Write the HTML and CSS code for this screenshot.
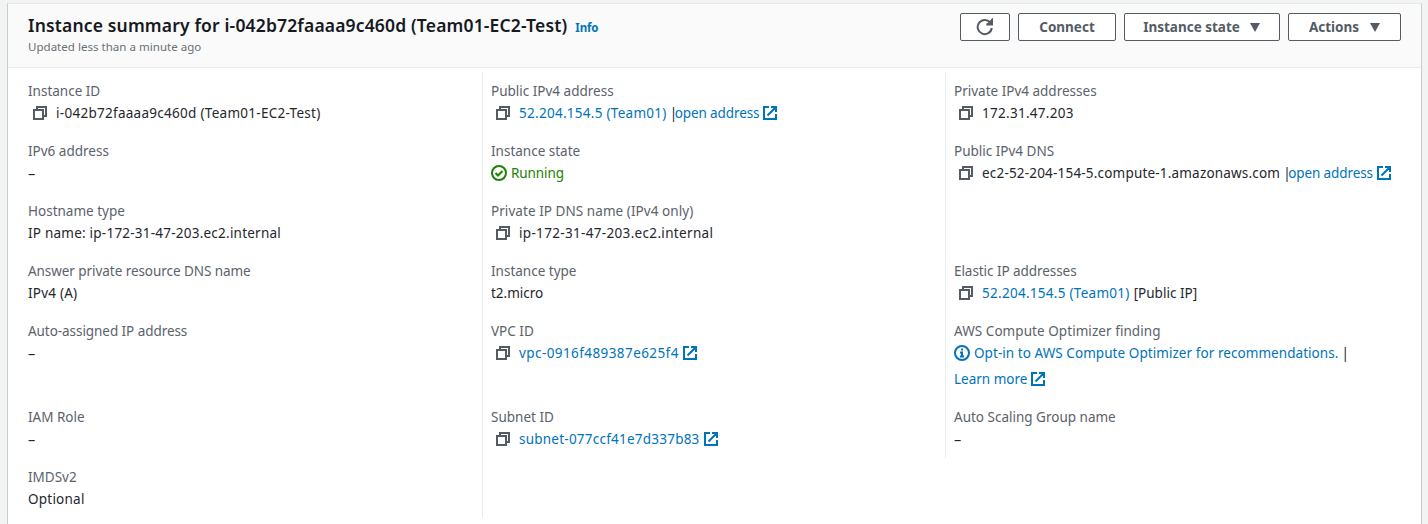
FILE: index.html
```
<!DOCTYPE html>
<html lang="en">
<head>
<meta charset="utf-8">
<title>Instance summary</title>
<link rel="stylesheet" href="styles.css">
</head>
<body>
<svg class="defs" width="0" height="0">
  <symbol id="copy" viewBox="0 0 14 14"><path d="M4 4V1h9v9h-3M1 4h9v9H1z"/></symbol>
  <symbol id="external" viewBox="0 0 14 14"><path d="M6 1H1v12h12V8M8 1h5v5M13 1 4.500 9.500"/></symbol>
  <symbol id="check" viewBox="0 0 16 16"><circle cx="8" cy="8" r="7"/><path d="m4.500 8 2.500 2.500 4.500-4.500"/></symbol>
  <symbol id="info" viewBox="0 0 16 16"><circle cx="8" cy="8" r="7"/><path d="M8 3.500v2M6 7.500h2V11M6 11.500h4"/></symbol>
  <symbol id="refresh" viewBox="0 0 18 18"><path d="M15.800 10A7.100 7.100 0 1 1 14.200 4.500L15.500 6M16 1v5.500h-5.500"/><path d="M12.500 5.500 16 2v3.500z"/></symbol>
</svg>
<main class="card">
  <header class="header">
    <div>
      <h1 class="title"><span class="title-text">Instance summary for i-042b72faaaa9c460d (Team01-EC2-Test)</span><a class="info-link">Info</a></h1>
      <p class="updated"><span>Updated less than a minute ago</span></p>
    </div>
    <div class="actions">
      <button class="btn btn-icon"><svg class="refresh"><use href="#refresh"/></svg></button>
      <button class="btn btn-connect"><span>Connect</span></button>
      <button class="btn btn-state"><span>Instance state</span><i class="caret"></i></button>
      <button class="btn btn-actions"><span>Actions</span><i class="caret"></i></button>
    </div>
  </header>
  <section class="details">
    <div class="cell"><div class="label"><span>Instance ID</span></div><div class="value"><svg class="copy"><use href="#copy"/></svg><span class="ident">i-042b72faaaa9c460d (Team01-EC2-Test)</span></div></div>
    <div class="cell"><div class="label"><span>Public IPv4 address</span></div><div class="value"><svg class="copy"><use href="#copy"/></svg><a class="ident">52.204.154.5 (Team01)</a><span class="sep">|</span><a class="open">open address</a><svg class="external"><use href="#external"/></svg></div></div>
    <div class="cell"><div class="label"><span>Private IPv4 addresses</span></div><div class="value"><svg class="copy"><use href="#copy"/></svg><span class="ident">172.31.47.203</span></div></div>

    <div class="cell"><div class="label"><span>IPv6 address</span></div><div class="value"><span class="dash">–</span></div></div>
    <div class="cell"><div class="label"><span>Instance state</span></div><div class="value running"><svg class="status"><use href="#check"/></svg><span class="open">Running</span></div></div>
    <div class="cell"><div class="label"><span>Public IPv4 DNS</span></div><div class="value"><svg class="copy"><use href="#copy"/></svg><span class="dns">ec2-52-204-154-5.compute-1.amazonaws.com</span><span class="sep">|</span><a class="open">open address</a><svg class="external"><use href="#external"/></svg></div></div>

    <div class="cell"><div class="label"><span>Hostname type</span></div><div class="value"><span class="host">IP name: ip-172-31-47-203.ec2.internal</span></div></div>
    <div class="cell"><div class="label"><span class="finding">Private IP DNS name (IPv4 only)</span></div><div class="value"><svg class="copy"><use href="#copy"/></svg><span class="private-dns">ip-172-31-47-203.ec2.internal</span></div></div>
    <div class="cell"></div>

    <div class="cell"><div class="label"><span class="snug">Answer private resource DNS name</span></div><div class="value"><span class="host">IPv4 (A)</span></div></div>
    <div class="cell"><div class="label"><span>Instance type</span></div><div class="value"><span>t2.micro</span></div></div>
    <div class="cell"><div class="label"><span class="snug">Elastic IP addresses</span></div><div class="value"><svg class="copy"><use href="#copy"/></svg><a class="ident">52.204.154.5 (Team01)</a><span class="note">[Public IP]</span></div></div>

    <div class="cell"><div class="label"><span class="snug">Auto-assigned IP address</span></div><div class="value"><span class="dash">–</span></div></div>
    <div class="cell"><div class="label"><span>VPC ID</span></div><div class="value"><svg class="copy"><use href="#copy"/></svg><a class="vpc">vpc-0916f489387e625f4</a><svg class="external"><use href="#external"/></svg></div></div>
    <div class="cell"><div class="label"><span class="finding">AWS Compute Optimizer finding</span></div><div class="value"><svg class="status info"><use href="#info"/></svg><a class="finding">Opt-in to AWS Compute Optimizer for recommendations.</a><span class="sep">|</span></div><div class="value second"><a>Learn more</a><svg class="external"><use href="#external"/></svg></div></div>

    <div class="cell"><div class="label"><span>IAM Role</span></div><div class="value"><span class="dash">–</span></div></div>
    <div class="cell"><div class="label"><span>Subnet ID</span></div><div class="value"><svg class="copy"><use href="#copy"/></svg><a class="host">subnet-077ccf41e7d337b83</a><svg class="external"><use href="#external"/></svg></div></div>
    <div class="cell"><div class="label"><span>Auto Scaling Group name</span></div><div class="value"><span class="dash">–</span></div></div>

    <div class="cell"><div class="label"><span>IMDSv2</span></div><div class="value"><span class="host">Optional</span></div></div>
    <div class="cell"></div>
  </section>
</main>
</body>
</html>
```
FILE: styles.css
```
* { box-sizing: border-box; }
body {
  margin: 0;
  height: 524px;
  overflow: hidden;
  padding: 3px 6px 0 7px;
  background: #f2f3f3;
  color: #24272d;
  font: 13.5px/22px "Noto Sans", "Open Sans", sans-serif;
}
.defs { position: absolute; }
svg { fill: none; stroke: currentColor; stroke-width: 2; flex: none; }
a { color: #0073bb; }

.card {
  height: 540px;
  background: #fff;
  border: 1px solid #c9cdcd;
  border-top-color: #e6e9e9;
}
.header {
  display: flex;
  justify-content: space-between;
  height: 64px;
  padding: 9px 20px 0;
  background: #fafafa;
  border-bottom: 1px solid #eaeded;
}
.title {
  display: flex;
  align-items: baseline;
  gap: 8px;
  margin: -1px 0 0;
  color: #16191f;
  font-size: 17.5px;
  line-height: 26px;
  font-weight: 600;
  letter-spacing: .16px;
}
.info-link { font-size: 11.5px; font-weight: 700; letter-spacing: -.1px; }
.updated { margin: -2px 0 0; font-size: 11.5px; line-height: 16px; color: #687078; letter-spacing: .03px; }
.actions { display: flex; gap: 8px; }
.btn {
  display: flex;
  align-items: center;
  justify-content: center;
  height: 28px;
  padding: 0;
  border: 1px solid #545b64;
  border-radius: 2px;
  background: #fff;
  color: #545b64;
  font: 700 13.5px/22px "Noto Sans", "Open Sans", sans-serif;
}
.btn-icon { width: 50px; }
.btn-connect { width: 98px; }
.btn-state { width: 156px; gap: 10px; padding-right: 1px; }
.btn-actions { width: 113px; gap: 11px; }
.refresh { width: 18px; height: 18px; }
.caret {
  border: 5.5px solid transparent;
  border-top: 9px solid #545b64;
  border-bottom: 0;
}

.details {
  display: grid;
  grid-template-columns: repeat(3, 463px);
  padding: 4px 0 0 11px;
}
.cell {
  min-height: 60px;
  padding: 8px 0 8px 8px;
  border-left: 1px solid #eaeded;
}
.cell:nth-child(3n + 1) { border-left-color: transparent; }
.label { height: 22px; color: #5b626b; }
.value { display: flex; align-items: center; height: 22px; white-space: nowrap; }
.second { margin-top: 4px; }
.copy { width: 14px; height: 14px; margin: 0 9px 0 5px; color: #545b64; }
.external { width: 14px; height: 14px; margin-left: 4px; color: #0073bb; }
.status { width: 16px; height: 16px; margin-right: 4px; }
.info { color: #0073bb; }
.running { color: #1d8102; }
.sep, .note { margin-left: 4px; }
.sep { width: 4px; text-indent: -1px; }
.ident { letter-spacing: .28px; }
.private-dns { letter-spacing: .33px; }
.host { letter-spacing: .23px; }
.dns { letter-spacing: .19px; }
.vpc { letter-spacing: .42px; }
.finding { letter-spacing: .06px; }
.snug { letter-spacing: -.06px; }
.open { letter-spacing: -.1px; }
.dash { font-size: 14.5px; }
```
